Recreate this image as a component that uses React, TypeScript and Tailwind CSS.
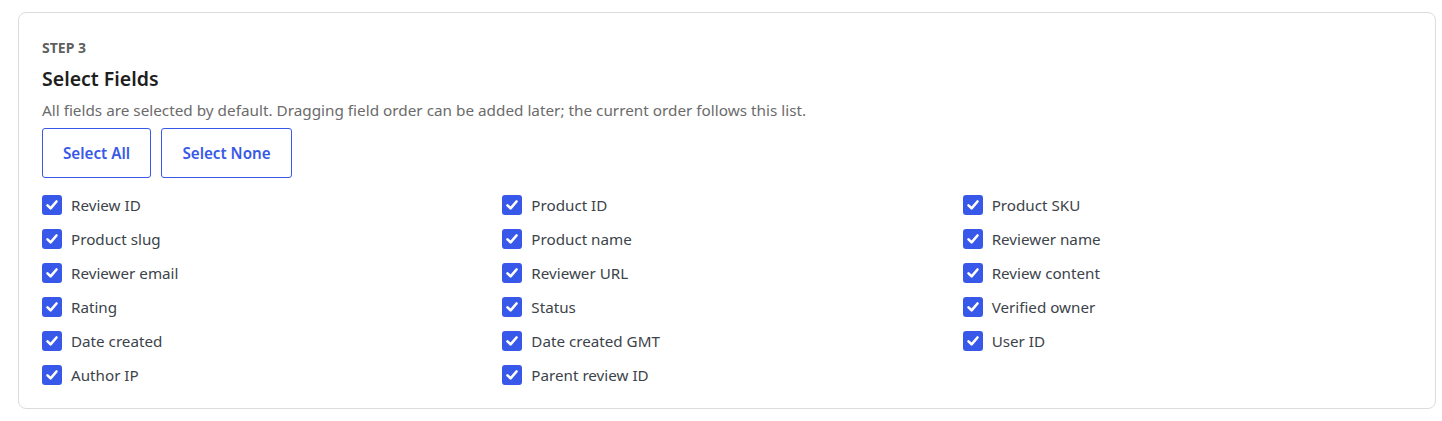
import React from "react";

const FIELDS = [
  "Review ID",
  "Product ID",
  "Product SKU",
  "Product slug",
  "Product name",
  "Reviewer name",
  "Reviewer email",
  "Reviewer URL",
  "Review content",
  "Rating",
  "Status",
  "Verified owner",
  "Date created",
  "Date created GMT",
  "User ID",
  "Author IP",
  "Parent review ID",
];

function CheckBox() {
  return (
    <span className="flex h-5 w-5 shrink-0 items-center justify-center rounded-[3px] bg-[#3858e9]">
      <svg width="14" height="14" viewBox="0 0 14 14" fill="none">
        <path
          d="M2.5 7.4 L5.6 10.3 L11.5 3.5"
          stroke="white"
          strokeWidth="2.6"
          strokeLinecap="round"
          strokeLinejoin="round"
        />
      </svg>
    </span>
  );
}

export default function App() {
  return (
    <div
      className="bg-white pt-3 pl-[18px]"
      style={{ fontFamily: '"Noto Sans", "Open Sans", sans-serif' }}
    >
      <div className="w-[1418px] rounded-lg border border-[#dcdcde] bg-white px-[23px] pt-[25px] pb-[23px]">
        <div className="text-[14px] font-bold uppercase leading-5 text-[#5f5f5f]">
          Step 3
        </div>
        <h2 className="mt-[7px] text-[19.5px] font-semibold leading-7 text-[#1e1e1e]">
          Select Fields
        </h2>
        <p className="mt-[6px] text-[15.3px] leading-[22px] text-[#6b6b6b]">
          All fields are selected by default. Dragging field order can be added later; the current order follows this list.
        </p>
        <div className="mt-[7px] flex gap-[10px]">
          <button className="h-[50px] w-[109px] rounded-[3px] border border-[#3858e9] bg-white text-[15.2px] font-semibold text-[#3858e9]">
            Select All
          </button>
          <button className="h-[50px] w-[131px] rounded-[3px] border border-[#3858e9] bg-white text-[15.2px] font-semibold text-[#3858e9]">
            Select None
          </button>
        </div>
        <div className="mt-[17px] grid grid-cols-3 gap-x-[11px] gap-y-[14px]">
          {FIELDS.map((f) => (
            <label key={f} className="flex h-5 items-center gap-[9px]">
              <CheckBox />
              <span className="text-[15.2px] text-[#3c434a]">{f}</span>
            </label>
          ))}
        </div>
      </div>
    </div>
  );
}
